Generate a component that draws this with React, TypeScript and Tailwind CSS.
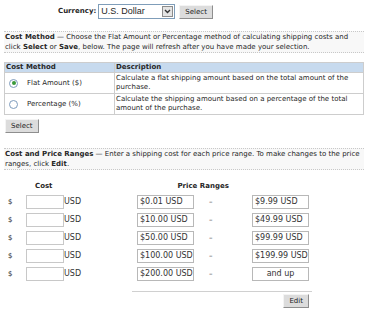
const ranges = [
  { from: "$0.01 USD", to: "$9.99 USD" },
  { from: "$10.00 USD", to: "$49.99 USD" },
  { from: "$50.00 USD", to: "$99.99 USD" },
  { from: "$100.00 USD", to: "$199.99 USD" },
  { from: "$200.00 USD", to: "and up" },
];

function Btn({ label }: { label: string }) {
  return (
    <span className="inline-block border border-t-[#f4f4f4] border-l-[#f4f4f4] border-r-[#8e8e8e] border-b-[#8e8e8e] bg-[#dcdcdc] px-[5px] text-[7px] leading-[12px] text-[#222]">
      {label}
    </span>
  );
}

function Radio({ checked }: { checked: boolean }) {
  return (
    <span className="flex h-[9px] w-[9px] items-center justify-center rounded-full border border-[#7d9bbd] bg-white">
      {checked && <span className="h-[4px] w-[4px] rounded-full bg-[#3a9a3a]" />}
    </span>
  );
}

export default function App() {
  return (
    <div className="h-[313px] w-[368px] overflow-hidden bg-white text-[7px] text-[#262626] font-['DejaVu_Sans',sans-serif]">
      <div className="flex items-center pl-[58px] pt-[4px]">
        <span className="mr-[2px] font-bold">Currency:</span>
        <div className="flex h-[15px] w-[77px] items-center border border-[#7f9db9] bg-white">
          <span className="flex-1 pl-[2px] text-[9px] font-['Liberation_Sans',sans-serif]">U.S. Dollar</span>
          <span className="mr-[1px] flex h-[11px] w-[11px] items-center justify-center border border-[#8c8c8c] bg-[#e4e4e4]">
            <svg width="7" height="5" viewBox="0 0 7 5">
              <path d="M1 1 L3.5 3.5 L6 1" stroke="#333" strokeWidth="1.4" fill="none" />
            </svg>
          </span>
        </div>
        <span className="ml-[4px]">
          <Btn label="Select" />
        </span>
      </div>

      <div className="mx-[4px] mt-[12px] border-y border-dotted border-[#c8c8c8] bg-[#f8f8f8] px-[1px] leading-[10px]">
        <b>Cost Method</b> — Choose the Flat Amount or Percentage method of calculating shipping costs and click{" "}
        <b>Select</b> or <b>Save</b>, below. The page will refresh after you have made your selection.
      </div>

      <table className="mx-[4px] mt-[9px] w-[360px] border-collapse border border-[#cdcdcd] leading-[9px]">
        <thead>
          <tr className="bg-[#c7daee]">
            <th className="h-[10px] w-[110px] border border-[#cdcdcd] px-[1px] py-0 text-left font-bold">Cost Method</th>
            <th className="h-[10px] border border-[#cdcdcd] px-[1px] py-0 text-left font-bold">Description</th>
          </tr>
        </thead>
        <tbody>
          <tr>
            <td className="border border-[#cdcdcd] px-[4px] py-0">
              <div className="flex items-center gap-[9px]">
                <Radio checked />
                <span>Flat Amount ($)</span>
              </div>
            </td>
            <td className="h-[20px] border border-[#cdcdcd] px-[1px] py-[1px] align-top">
              Calculate a flat shipping amount based on the total amount of the purchase.
            </td>
          </tr>
          <tr>
            <td className="border border-[#cdcdcd] px-[4px] py-0">
              <div className="flex items-center gap-[9px]">
                <Radio checked={false} />
                <span>Percentage (%)</span>
              </div>
            </td>
            <td className="h-[20px] border border-[#cdcdcd] px-[1px] py-[1px] align-top">
              Calculate the shipping amount based on a percentage of the total amount of the purchase.
            </td>
          </tr>
        </tbody>
      </table>

      <div className="ml-[5px] mt-[4px] flex">
        <Btn label="Select" />
      </div>

      <div className="mx-[4px] mt-[15px] border-y border-dotted border-[#c8c8c8] bg-[#f8f8f8] px-[1px] leading-[10px]">
        <b>Cost and Price Ranges</b> — Enter a shipping cost for each price range. To make changes to the price
        ranges, click <b>Edit</b>.
      </div>

      <div className="mt-[12px] flex font-bold leading-[9px]">
        <span className="ml-[35px]">Cost</span>
        <span className="ml-[125px]">Price Ranges</span>
      </div>

      <div className="mt-[4px] flex flex-col gap-[4px]">
        {ranges.map((r) => (
          <div key={r.from} className="flex items-center">
            <span className="ml-[8px] w-[18px]">$</span>
            <span className="h-[14px] w-[38px] border border-[#c8c8c8] bg-white" />
            <span className="w-[73px] text-[8px] text-[#333]">USD</span>
            <span className="flex h-[14px] w-[57px] items-center border border-[#b8b8b8] pl-[2px] text-[8px] text-[#333]">
              {r.from}
            </span>
            <span className="w-[58px] pl-[15px]">–</span>
            <span
              className={`flex h-[14px] w-[57px] items-center border border-[#b8b8b8] text-[8px] text-[#333] ${
                r.to === "and up" ? "justify-center" : "pl-[2px]"
              }`}
            >
              {r.to}
            </span>
          </div>
        ))}
      </div>

      <div className="ml-[132px] mt-[10px] w-[180px] border-t border-[#d0d0d0]" />
      <div className="mt-[2px] flex w-[309px] justify-end">
        <Btn label="Edit" />
      </div>
    </div>
  );
}
